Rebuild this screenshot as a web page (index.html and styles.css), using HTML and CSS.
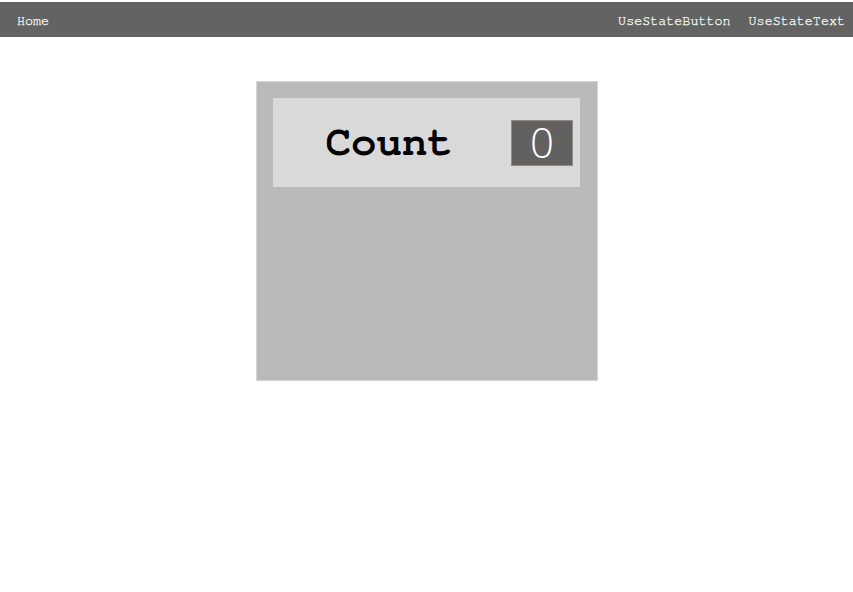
FILE: index.html
```html
<!DOCTYPE html>
<html>
<head>
<meta charset="utf-8">
<link rel="stylesheet" href="styles.css">
</head>
<body>
<nav class="navbar">
  <a class="nav-link" href="#">Home</a>
  <div class="nav-right">
    <a class="nav-link" href="#">UseStateButton</a>
    <a class="nav-link" href="#">UseStateText</a>
  </div>
</nav>
<main class="main">
  <section class="card">
    <div class="counter">
      <span class="counter-label">Count</span>
      <span class="counter-value">0</span>
    </div>
  </section>
</main>
</body>
</html>
```
FILE: styles.css
```css
html, body {
  margin: 0;
  padding: 0;
  background: #ffffff;
}
body {
  padding-top: 2px;
}
.navbar {
  height: 35px;
  box-sizing: border-box;
  background: #646363;
  display: flex;
  justify-content: space-between;
  align-items: center;
  padding: 3px 8px 0 17px;
  font-family: "Nimbus Mono PS", "FreeMono", "Courier New", "Liberation Mono", monospace;
  font-size: 13.4px;
}
.nav-right {
  display: flex;
  gap: 18px;
}
.nav-link {
  color: #ffffff;
  text-decoration: none;
  -webkit-text-stroke: 0.25px #ffffff;
}
.main {
  display: flex;
  justify-content: center;
  padding-top: 44px;
  padding-left: 1px;
}
.card {
  width: 342px;
  height: 300px;
  background: #bababa;
  border: 1px solid #d4d4d4;
  padding: 16px;
  box-sizing: border-box;
}
.counter {
  width: 307px;
  height: 89px;
  background: #d9d9d9;
  display: flex;
  align-items: center;
  justify-content: flex-end;
  padding-right: 7px;
  box-sizing: border-box;
}
.counter-label {
  font-family: "Nimbus Mono PS", "FreeMono", "Courier New", "Liberation Mono", monospace;
  font-weight: bold;
  font-size: 42.5px;
  color: #000;
  margin-right: 58px;
}
.counter-value {
  width: 62px;
  height: 46px;
  box-sizing: border-box;
  background: #636060;
  border: 1px solid #8e8c8c;
  color: #fff;
  font-family: "Open Sans", sans-serif;
  font-weight: 300;
  font-size: 42px;
  line-height: 42px;
  text-align: center;
}
```
